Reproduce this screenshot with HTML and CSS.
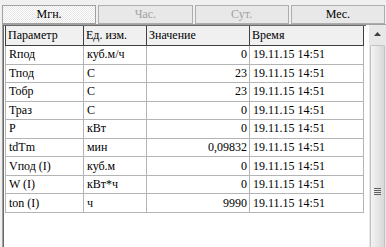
FILE: index.html
```html
<!DOCTYPE html>
<html lang="ru">
<head>
    <meta charset="UTF-8">
    <title>Текущие</title>
    <link rel="stylesheet" href="styles.css">
</head>
<body>
    <div class="tabs">
        <div class="tab active">Мгн.</div>
        <div class="tab disabled">Час.</div>
        <div class="tab disabled">Сут.</div>
        <div class="tab">Мес.</div>
    </div>
    <div class="list">
        <div class="grid-wrap">
            <table class="grid">
                <thead>
                    <tr>
                        <th class="c-name">Параметр</th>
                        <th class="c-unit">Ед. изм.</th>
                        <th class="c-val">Значение</th>
                        <th class="c-time">Время</th>
                    </tr>
                </thead>
                <tbody>
                    <tr><td>Rпод</td><td>куб.м/ч</td><td class="num">0</td><td>19.11.15 14:51</td></tr>
                    <tr><td>Тпод</td><td>С</td><td class="num">23</td><td>19.11.15 14:51</td></tr>
                    <tr><td>Тобр</td><td>С</td><td class="num">23</td><td>19.11.15 14:51</td></tr>
                    <tr><td>Траз</td><td>С</td><td class="num">0</td><td>19.11.15 14:51</td></tr>
                    <tr><td>P</td><td>кВт</td><td class="num">0</td><td>19.11.15 14:51</td></tr>
                    <tr><td>tdTm</td><td>мин</td><td class="num">0,09832</td><td>19.11.15 14:51</td></tr>
                    <tr><td>Vпод (I)</td><td>куб.м</td><td class="num">0</td><td>19.11.15 14:51</td></tr>
                    <tr><td>W (I)</td><td>кВт*ч</td><td class="num">0</td><td>19.11.15 14:51</td></tr>
                    <tr><td>ton (I)</td><td>ч</td><td class="num">9990</td><td>19.11.15 14:51</td></tr>
                </tbody>
            </table>
        </div>
        <div class="scrollbar">
            <div class="sb-up">
                <svg width="7" height="4" viewBox="0 0 7 4"><path d="M0 4 L3.5 0 L7 4 Z" fill="#404040"/></svg>
            </div>
            <div class="sb-thumb">
                <div class="grip"></div>
            </div>
        </div>
    </div>
</body>
</html>
```

FILE: styles.css
```css
html, body {
    margin: 0;
    padding: 0;
    background: #f0f0f0;
    font-family: "Liberation Serif", "Times New Roman", serif;
    font-size: 12px;
    color: #000;
    overflow: hidden;
    height: 247px;
}
.tabs {
    display: flex;
    gap: 2px;
    padding: 5px 1px 0 2px;
    height: 19px;
}
.tab {
    flex: 1;
    height: 17px;
    border: 1px solid #adadad;
    background: #e8e8e8;
    text-align: center;
    line-height: 17px;
}
.tab.active {
    background-color: #fff;
    background-image: repeating-conic-gradient(#e6e6e6 0 25%, #fff 0 50%);
    background-size: 2px 2px;
    border-color: #a0a0a0;
}
.tab.disabled {
    color: #a0a0a0;
}
.list {
    display: flex;
    margin-left: 2px;
    height: 223px;
    background: #fff;
    border-left: 1px solid #a0a0a0;
    border-top: 1px solid #a0a0a0;
}
.grid-wrap {
    flex: 1;
    border-left: 1px solid #696969;
    border-top: 1px solid #696969;
    padding-left: 1px;
}
.grid {
    border-collapse: collapse;
    table-layout: fixed;
    width: 358px;
}
.grid th {
    height: 19px;
    padding: 0 2px;
    background: #f0f0f0;
    border: 1px solid #404040;
    border-top: none;
    text-align: left;
    font-weight: normal;
    white-space: nowrap;
}
.grid td {
    height: 17.55px;
    padding: 0 2px 0 3px;
    border: 1px solid #b4b4b4;
    white-space: nowrap;
}
.grid td.num {
    text-align: right;
    padding-right: 2px;
}
.c-name { width: 73px; }
.c-unit { width: 58px; }
.c-val { width: 98px; }
.c-time { width: 109px; }
.scrollbar {
    width: 17px;
    margin-left: 3px;
    background: #e8e8e8;
    display: flex;
    flex-direction: column;
    align-items: center;
}
.sb-up {
    height: 17px;
    width: 17px;
    display: flex;
    align-items: center;
    justify-content: center;
}
.sb-thumb {
    flex: 1;
    width: 13px;
    margin-top: 3px;
    border: 1px solid #c2c2c2;
    border-bottom: none;
    border-radius: 2px 2px 0 0;
    background: linear-gradient(to right, #f4f4f4, #e6e6e6 50%, #d8d8d8);
    position: relative;
}
.grip {
    position: absolute;
    left: 3px;
    top: 142px;
    width: 7px;
    height: 7px;
    background: repeating-linear-gradient(#606060 0 1px, transparent 1px 2px);
}
```
